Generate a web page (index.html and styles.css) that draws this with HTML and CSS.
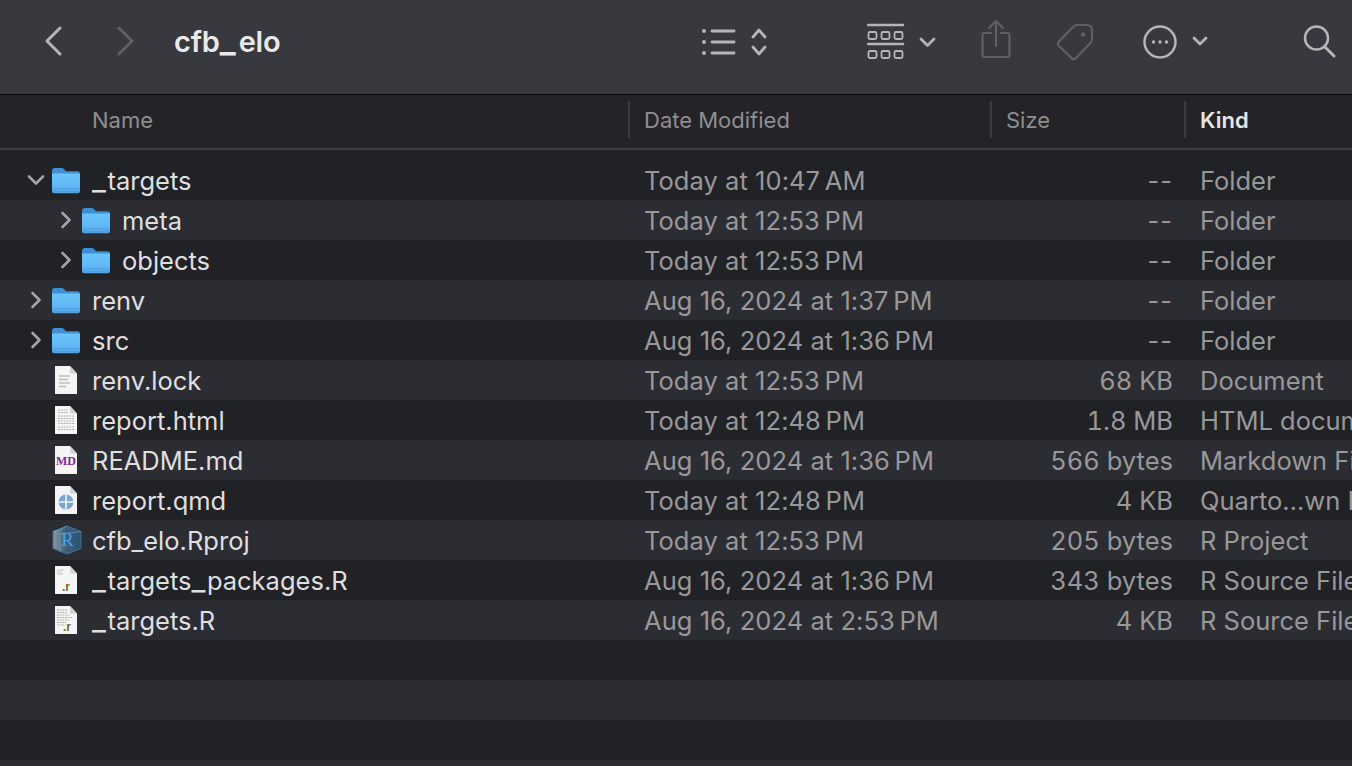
FILE: index.html
```html
<!DOCTYPE html>
<html lang="en">
<head>
<meta charset="utf-8">
<title>cfb_elo</title>
<link rel="stylesheet" href="styles.css">
</head>
<body>
<svg class="defs" width="0" height="0" aria-hidden="true">
  <defs>
    <linearGradient id="fg" x1="0" y1="0" x2="0" y2="1"><stop offset="0" stop-color="#6cc4fa"/><stop offset="0.75" stop-color="#5cb6f4"/><stop offset="1" stop-color="#4f9fdf"/></linearGradient>
    <linearGradient id="cube" x1="0" y1="0" x2="1" y2="0"><stop offset="0" stop-color="#8b98a3"/><stop offset="0.45" stop-color="#3f5f7b"/><stop offset="1" stop-color="#2b5373"/></linearGradient>
    <symbol id="folder" viewBox="0 0 30 28">
      <path d="M1 5.500C1 3 2 2 4 2h6.500c1.400 0 2 .5 3 1.600L15 5.200h11.500c1.700 0 2.500 1 2.500 2.500V9H1z" fill="#3f8fd6"/>
      <path d="M1 7.500h28v17.500c0 1.400-.8 2.200-2.200 2.200H3.200C1.800 27.200 1 26.400 1 25z" fill="url(#fg)"/>
      <path d="M1 22.500h28M1 25h28" stroke="#4c9edf" stroke-width=".8" fill="none"/>
    </symbol>
    <symbol id="page" viewBox="0 0 24 30">
      <path d="M1 1h15l7 7.500V29H1z" fill="#f5f5f5"/>
      <path d="M16 1l7 7.500h-7z" fill="#d2d2d2"/>
    </symbol>
  </defs>
</svg>
<div class="window">
  <header class="toolbar">
    <svg class="tb-back" width="20" height="32" viewBox="0 0 20 32"><path d="M16 3L3 16l13 13" class="ln ln-strong"/></svg>
    <svg class="tb-forward" width="20" height="32" viewBox="0 0 20 32"><path d="M3 3l13 13L3 29" class="ln ln-dim"/></svg>
    <h1 class="title">cfb<span class="us-title">_</span>elo</h1>
    <svg class="tb-list" width="70" height="36" viewBox="0 0 70 36">
      <g class="ln ln-thin"><path d="M11 7h22M11 18h22M11 29h22"/></g>
      <circle cx="3" cy="7" r="2" class="dot"/><circle cx="3" cy="18" r="2" class="dot"/><circle cx="3" cy="29" r="2" class="dot"/>
      <path d="M52 13l6-7 6 7M52 23l6 7 6-7" class="ln ln-thin"/>
    </svg>
    <svg class="tb-gallery" width="72" height="38" viewBox="0 0 72 38">
      <path d="M1 2h35M1 21h35" class="ln ln-mid"/>
      <g class="box"><rect x="1.500" y="9" width="8" height="7" rx="1.500"/><rect x="14.500" y="9" width="8" height="7" rx="1.500"/><rect x="27.500" y="9" width="8" height="7" rx="1.500"/><rect x="1.500" y="28" width="8" height="7" rx="1.500"/><rect x="14.500" y="28" width="8" height="7" rx="1.500"/><rect x="27.500" y="28" width="8" height="7" rx="1.500"/></g>
      <path d="M54 16l6.500 6.500L67 16" class="ln ln-thin"/>
    </svg>
    <svg class="tb-share" width="32" height="38" viewBox="0 0 32 38"><path d="M10 13H3.500C2 13 1.500 14 1.500 15v20c0 1 .5 2 2 2h23c1.500 0 2-1 2-2V15c0-1-.5-2-2-2H20M15 26V2M8 8l7-7 7 7" class="ln ln-dim ln-2"/></svg>
    <svg class="tb-tag" width="38" height="38" viewBox="0 0 38 38"><path d="M21 2h10c3 0 5 2 5 5v9c0 2-.7 3-2 4.500L20 35c-1.500 1.500-3 1.500-4.500 0L3 23c-1.500-1.500-1.500-3 0-4.500L17 4c1.300-1.300 2.500-2 4-2z" class="ln ln-dim ln-2"/><circle cx="27" cy="11.500" r="2.200" fill="#5f6064"/></svg>
    <svg class="tb-more" width="66" height="36" viewBox="0 0 66 36">
      <circle cx="17" cy="18" r="15.500" class="ln ln-mid"/>
      <circle cx="10.500" cy="18" r="1.700" class="dot"/><circle cx="17" cy="18" r="1.700" class="dot"/><circle cx="23.500" cy="18" r="1.700" class="dot"/>
      <path d="M51 14l6 6 6-6" class="ln ln-thin"/>
    </svg>
    <svg class="tb-search" width="34" height="36" viewBox="0 0 34 36"><circle cx="13.500" cy="14" r="11.500" class="ln ln-mid"/><path d="M22 23l9 9" class="ln ln-strong"/></svg>
  </header>

  <div class="columns">
    <div class="col col-name">Name</div>
    <div class="col col-date">Date Modified</div>
    <div class="col col-size">Size</div>
    <div class="col col-kind">Kind</div>
  </div>

  <main class="list">
    <div class="row">
      <div class="name"><svg class="chev" viewBox="0 0 18 18"><path d="M2 5.500l7 7 7-7"/></svg><svg class="ic-folder"><use href="#folder"/></svg><span><span class="us">_</span>targets</span></div>
      <div class="date">Today at 10:47&#8201;AM</div><div class="size none">--</div><div class="kind">Folder</div>
    </div>
    <div class="row">
      <div class="name indent"><svg class="chev" viewBox="0 0 18 18"><path d="M5.500 2l7 7-7 7"/></svg><svg class="ic-folder"><use href="#folder"/></svg><span>meta</span></div>
      <div class="date">Today at 12:53&#8201;PM</div><div class="size none">--</div><div class="kind">Folder</div>
    </div>
    <div class="row">
      <div class="name indent"><svg class="chev" viewBox="0 0 18 18"><path d="M5.500 2l7 7-7 7"/></svg><svg class="ic-folder"><use href="#folder"/></svg><span>objects</span></div>
      <div class="date">Today at 12:53&#8201;PM</div><div class="size none">--</div><div class="kind">Folder</div>
    </div>
    <div class="row">
      <div class="name"><svg class="chev" viewBox="0 0 18 18"><path d="M5.500 2l7 7-7 7"/></svg><svg class="ic-folder"><use href="#folder"/></svg><span>renv</span></div>
      <div class="date">Aug 16, 2024 at 1:37&#8201;PM</div><div class="size none">--</div><div class="kind">Folder</div>
    </div>
    <div class="row">
      <div class="name"><svg class="chev" viewBox="0 0 18 18"><path d="M5.500 2l7 7-7 7"/></svg><svg class="ic-folder"><use href="#folder"/></svg><span>src</span></div>
      <div class="date">Aug 16, 2024 at 1:36&#8201;PM</div><div class="size none">--</div><div class="kind">Folder</div>
    </div>
    <div class="row">
      <div class="name"><span class="chev"></span><svg class="ic-file" viewBox="0 0 24 30"><use href="#page"/><path d="M5 11h11M5 14.500h9M5 18h11M5 21.500h7" stroke="#bdbdbd" stroke-width="1.300"/></svg><span>renv.lock</span></div>
      <div class="date">Today at 12:53&#8201;PM</div><div class="size">68 KB</div><div class="kind">Document</div>
    </div>
    <div class="row">
      <div class="name"><span class="chev"></span><svg class="ic-file" viewBox="0 0 24 30"><use href="#page"/><path d="M4 5h10M4 7.500h10M4 11h16M4 13.500h16M4 16h16M4 18.500h16M4 22h16M4 24.500h16" stroke="#b4b4b4" stroke-width="1.200" stroke-dasharray="2 .8"/></svg><span>report.html</span></div>
      <div class="date">Today at 12:48&#8201;PM</div><div class="size">1.8 MB</div><div class="kind">HTML document</div>
    </div>
    <div class="row">
      <div class="name"><span class="chev"></span><svg class="ic-file" viewBox="0 0 24 30"><use href="#page"/><text x="12" y="19.500" class="md">MD</text></svg><span>README.md</span></div>
      <div class="date">Aug 16, 2024 at 1:36&#8201;PM</div><div class="size">566 bytes</div><div class="kind">Markdown File</div>
    </div>
    <div class="row">
      <div class="name"><span class="chev"></span><svg class="ic-file" viewBox="0 0 24 30"><use href="#page"/><circle cx="12" cy="17" r="7.500" fill="#7aa6d6"/><path d="M12 9.500v15M4.500 17h15" stroke="#f5f5f5" stroke-width="1.600"/></svg><span>report.qmd</span></div>
      <div class="date">Today at 12:48&#8201;PM</div><div class="size">4 KB</div><div class="kind">Quarto…wn File</div>
    </div>
    <div class="row">
      <div class="name"><span class="chev"></span><svg class="ic-cube" viewBox="0 0 32 30"><path d="M16 1l14 5.500v17L16 29 2 23.500v-17z" fill="url(#cube)" stroke="#3f6f94"/><path d="M16 1L9 4.500 2 6.500l7 2.500 21-2.500M9 9v18" stroke="#6ea2c6" stroke-width=".7" fill="none"/><text x="16.500" y="21" class="r-letter">R</text></svg><span>cfb_elo.Rproj</span></div>
      <div class="date">Today at 12:53&#8201;PM</div><div class="size">205 bytes</div><div class="kind">R Project</div>
    </div>
    <div class="row">
      <div class="name"><span class="chev"></span><svg class="ic-file" viewBox="0 0 24 30"><use href="#page"/><path d="M3 5h7M3 7h5M3 9h6" stroke="#c4c4c4"/><text x="12" y="26" class="r-ext">.r</text></svg><span><span class="us">_</span>targets<span class="us">_</span>packages.R</span></div>
      <div class="date">Aug 16, 2024 at 1:36&#8201;PM</div><div class="size">343 bytes</div><div class="kind">R Source File</div>
    </div>
    <div class="row">
      <div class="name"><span class="chev"></span><svg class="ic-file" viewBox="0 0 24 30"><use href="#page"/><path d="M3 5h11M3 7.500h10M3 10h13M3 12.500h15M3 15h12M3 17.500h9M3 20h7" stroke="#b4b4b4" stroke-dasharray="2 .6"/><text x="13" y="26" class="r-ext">.r</text></svg><span><span class="us">_</span>targets.R</span></div>
      <div class="date">Aug 16, 2024 at 2:53&#8201;PM</div><div class="size">4 KB</div><div class="kind">R Source File</div>
    </div>
    <div class="row"></div>
    <div class="row"></div>
    <div class="row"></div>
    <div class="row"></div>
  </main>
</div>
</body>
</html>
```
FILE: styles.css
```css
* { box-sizing: border-box; }
html, body { margin: 0; height: 100%; overflow: hidden; background: #212226; }
body { font-family: Inter, "Liberation Sans", sans-serif; -webkit-font-smoothing: antialiased; }
.defs { display: block; height: 0; }
.window { width: 1352px; height: 766px; overflow: hidden; }

.toolbar { position: relative; height: 95px; background: #38393e; border-bottom: 1px solid #08080a; }
.toolbar svg { position: absolute; }
.title { position: absolute; left: 174px; top: 24px; margin: 0; font-size: 29px; line-height: 36px; font-weight: 600; letter-spacing: -0.2px; color: #e9e9ea; }
.us-title { font-size: 34px; line-height: 0; letter-spacing: 3px; }
.ln { fill: none; stroke: #b5b5b7; stroke-linecap: round; stroke-linejoin: round; }
.ln-strong { stroke-width: 3; }
.ln-mid { stroke-width: 2.500; }
.ln-thin { stroke-width: 2.800; }
.ln-2 { stroke-width: 2.200; }
.ln-dim { stroke: #5f6064; }
.tb-forward .ln-dim { stroke-width: 3; }
.dot { fill: #b5b5b7; }
.box rect { fill: none; stroke: #b5b5b7; stroke-width: 1.800; }
.tb-back { left: 44px; top: 25px; }
.tb-forward { left: 116px; top: 25px; }
.tb-list { left: 701px; top: 24px; }
.tb-gallery { left: 867px; top: 23px; }
.tb-share { left: 981px; top: 20px; }
.tb-tag { left: 1056px; top: 23px; }
.tb-more { left: 1143px; top: 24px; }
.tb-search { left: 1303px; top: 24px; }

.columns, .row { display: grid; grid-template-columns: 628px 362px 194px 1fr; }
.columns { height: 55px; background: #242428; border-bottom: 2px solid #3c3d40; padding-bottom: 10px; align-items: stretch; }
.col { display: flex; align-items: center; font-size: 22px; letter-spacing: 0; color: #8e8e91; margin-top: 6px; }
.col-name { padding-left: 92px; }
.col-date, .col-size, .col-kind { padding-left: 14px; border-left: 2px solid #3a3b3e; }
.col-kind { color: #e4e4e5; font-weight: 600; }

.list { padding-top: 10px; }
.row { height: 40px; grid-template-rows: 40px; align-items: center; font-size: 25.500px; line-height: 40px; white-space: nowrap; background: #212226; }
.row:nth-child(even) { background: #2c2d32; }
.name { display: flex; align-items: center; padding-left: 27px; color: #dfdfe0; }
.name.indent { padding-left: 57px; }
.name > span:last-child, .date, .size, .kind { padding-top: 2px; }
.us { font-size: 30.500px; line-height: 0; letter-spacing: 1.500px; }
.chev { width: 18px; height: 18px; flex: none; fill: none; }
svg.chev path { fill: none; stroke: #a3a3a5; stroke-width: 2.600; stroke-linecap: round; stroke-linejoin: round; }
.ic-folder { width: 30px; height: 28px; margin-left: 6px; margin-right: 11px; flex: none; }
.ic-file { width: 24px; height: 30px; margin-left: 9px; margin-right: 14px; flex: none; }
.ic-cube { width: 32px; height: 30px; margin-left: 6px; margin-right: 9px; flex: none; }
.md { font-family: "Liberation Serif", serif; font-size: 12px; font-weight: 700; fill: #8a1f9c; text-anchor: middle; }
.r-letter { font-family: "Liberation Serif", serif; font-size: 18px; fill: #4aa3e8; text-anchor: middle; }
.r-ext { font-family: "Liberation Sans", sans-serif; font-size: 12px; font-weight: 700; fill: #6f6f2a; text-anchor: middle; }
.date { padding-left: 16px; color: #98989b; letter-spacing: 0.05px; }
.size { padding-right: 11px; text-align: right; color: #98989b; font-variant-numeric: tabular-nums; }
.size.none { font-variant-numeric: normal; letter-spacing: 1px; }
.kind { padding-left: 16px; color: #98989b; }
```
